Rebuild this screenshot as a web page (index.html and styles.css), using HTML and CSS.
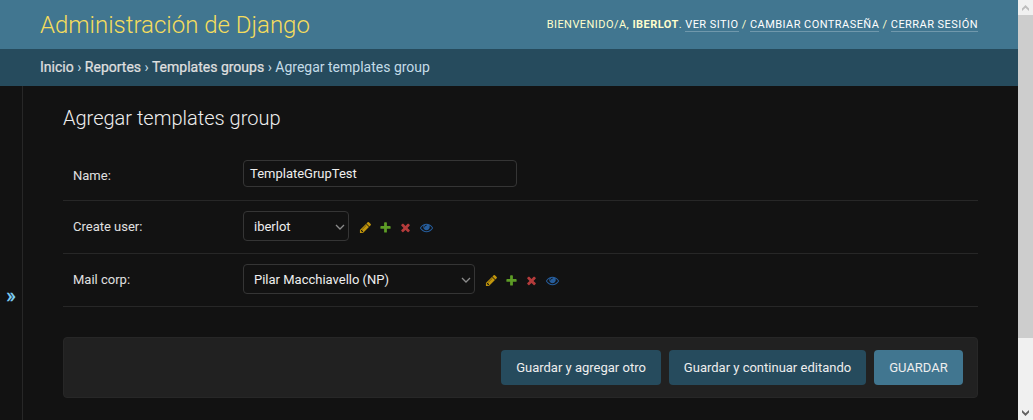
FILE: index.html
```html
<!DOCTYPE html>
<html lang="es">
<head>
<meta charset="utf-8">
<title>Agregar templates group | Administración de Django</title>
<link rel="stylesheet" href="styles.css">
</head>
<body>
<svg class="sprite" aria-hidden="true">
  <symbol id="change" viewBox="0 0 1792 1792"><path d="M491 1536l91-91-235-235-91 91v107h128v128h107zm523-928q0-22-22-22-10 0-17 7l-542 542q-7 7-7 17 0 22 22 22 10 0 17-7l542-542q7-7 7-17zm-54-192l416 416-832 832H128v-416zm683 96q0 53-37 90l-166 166-416-416 166-165q36-38 90-38 53 0 91 38l235 234q37 39 37 91z"/></symbol>
  <symbol id="add" viewBox="0 0 1792 1792"><path d="M1600 796v192q0 40-28 68t-68 28h-416v416q0 40-28 68t-68 28H800q-40 0-68-28t-28-68v-416H288q-40 0-68-28t-28-68V796q0-40 28-68t68-28h416V284q0-40 28-68t68-28h192q40 0 68 28t28 68v416h416q40 0 68 28t28 68z"/></symbol>
  <symbol id="delete" viewBox="0 0 1792 1792"><path d="M1490 1322q0 40-28 68l-136 136q-28 28-68 28t-68-28l-294-294-294 294q-28 28-68 28t-68-28l-136-136q-28-28-28-68t28-68l294-294-294-294q-28-28-28-68t28-68l136-136q28-28 68-28t68 28l294 294 294-294q28-28 68-28t68 28l136 136q28 28 28 68t-28 68l-294 294 294 294q28 28 28 68z"/></symbol>
  <symbol id="view" viewBox="0 0 1792 1792"><path d="M1664 960q-152-236-381-353 61 104 61 225 0 185-131.500 316.500T896 1280t-316.500-131.500T448 832q0-121 61-225-229 117-381 353 133 205 333.500 326.500T896 1408t434.500-121.500T1664 960zM944 576q0-20-14-34t-34-14q-125 0-214.500 89.500T592 832q0 20 14 34t34 14 34-14 14-34q0-86 61-147t147-61q20 0 34-14t14-34zm848 384q0 34-20 69-140 230-376.500 368.500T896 1536t-499.500-139T20 1029Q0 994 0 960t20-69q140-229 376.500-368T896 384t499.500 139T1772 891q20 35 20 69z"/></symbol>
  <symbol id="chevron" viewBox="0 0 10 6"><path d="M1 1l4 4 4-4" fill="none" stroke="currentColor" stroke-width="1.3"/></symbol>
</svg>
<div class="window">
  <div class="page">
    <header class="header">
      <h1 class="brand">Administración de Django</h1>
      <div class="user-tools">Bienvenido/a, <strong>iberlot</strong>. <a>Ver sitio</a> / <a>Cambiar contraseña</a> / <a>Cerrar sesión</a></div>
    </header>
    <nav class="breadcrumbs"><a>Inicio</a> › <a>Reportes</a> › <a>Templates groups</a> › Agregar templates group</nav>
    <div class="main">
      <div class="nav-toggle"><span>»</span></div>
      <main class="content">
        <h2 class="title">Agregar templates group</h2>
        <div class="row row-name"><label class="label">Name:</label><div class="input">TemplateGrupTest</div></div>
        <div class="row row-select">
          <label class="label">Create user:</label>
          <div class="select select-user">iberlot<svg class="chevron"><use href="#chevron"/></svg></div>
          <div class="links"><svg class="icon change"><use href="#change"/></svg><svg class="icon add"><use href="#add"/></svg><svg class="icon delete"><use href="#delete"/></svg><svg class="icon view"><use href="#view"/></svg></div>
        </div>
        <div class="row row-select">
          <label class="label">Mail corp:</label>
          <div class="select select-mail">Pilar Macchiavello (NP)<svg class="chevron"><use href="#chevron"/></svg></div>
          <div class="links"><svg class="icon change"><use href="#change"/></svg><svg class="icon add"><use href="#add"/></svg><svg class="icon delete"><use href="#delete"/></svg><svg class="icon view"><use href="#view"/></svg></div>
        </div>
        <div class="submit-row">
          <div class="button button-another">Guardar y agregar otro</div>
          <div class="button button-continue">Guardar y continuar editando</div>
          <div class="button button-save">GUARDAR</div>
        </div>
      </main>
    </div>
  </div>
  <div class="scrollbar">
    <div class="arrow arrow-up"><svg viewBox="0 0 7 6"><path d="M0 3.500L3.500 0 7 3.500V6L3.500 2.800 0 6z"/></svg></div>
    <div class="thumb"></div>
    <div class="arrow arrow-down"><svg viewBox="0 0 7 6"><path d="M0 0l3.500 3.200L7 0v2.500L3.500 6 0 2.500z"/></svg></div>
  </div>
</div>
</body>
</html>
```

FILE: styles.css
```css
* { box-sizing: border-box; }
body { margin: 0; background: #121212; color: #eee; font: 13px/20px Roboto, "Liberation Sans", sans-serif; }
.sprite { display: none; }
.window { display: flex; height: 420px; overflow: hidden; }
.page { flex: 1; display: flex; flex-direction: column; }
.header { height: 49px; padding: 0 40px; display: flex; align-items: center; justify-content: space-between; background: #417690; color: #ffc; }
.brand { margin: 0; font-size: 24px; line-height: 30px; font-weight: 300; color: #f5dd5d; }
.user-tools { font-size: 11px; line-height: 14px; letter-spacing: .45px; font-weight: 400; text-transform: uppercase; white-space: nowrap; }
.user-tools strong { font-weight: 700; }
.user-tools a { color: #fff; border-bottom: 1px solid rgba(255,255,255,.25); }
.breadcrumbs { height: 37px; padding: 9px 40px; font-size: 14px; line-height: 18px; background: #264b5d; color: #c4dce8; white-space: pre; }
.breadcrumbs a { color: #e0e0e0; -webkit-text-stroke: .2px #e0e0e0; }
.main { flex: 1; display: flex; }
.nav-toggle { width: 23px; padding-top: 200px; border-right: 1px solid #272727; text-align: center; font-size: 20px; line-height: 20px; color: #81d4fa; -webkit-text-stroke: .4px #81d4fa; }
.content { flex: 1; padding: 20px 40px 0; }
.title { margin: 0; height: 44px; font-size: 20px; line-height: 24px; font-weight: 300; }
.row { display: flex; align-items: center; padding: 0 10px; border-bottom: 1px solid #272727; }
.row-name { height: 51px; padding-top: 10px; align-items: flex-start; }
.row-select { height: 53px; align-items: flex-start; padding-top: 10px; }
.label { width: 170px; padding-top: 6px; color: #e0e0e0; }
.input { width: 274px; height: 27px; padding: 3px 6px; border: 1px solid #353535; border-radius: 4px; line-height: 19px; }
.select { height: 30px; display: flex; align-items: center; justify-content: space-between; padding: 1px 3px 0 10px; border: 1px solid #353535; border-radius: 4px; }
.select-user { width: 106px; }
.select-mail { width: 232px; }
.chevron { width: 10px; height: 6px; color: #8b8b8b; }
.links { display: flex; gap: 7.2px; padding: 10px 0 0 10px; }
.icon { width: 13px; height: 13px; opacity: .8; }
.change { fill: #efb80b; }
.add { fill: #70bf2b; }
.delete { fill: #dd4646; }
.view { fill: #2b70bf; }
.submit-row { margin-top: 30px; height: 61px; padding: 12px 14px; display: flex; justify-content: flex-end; gap: 8px; border: 1px solid #272727; border-radius: 4px; background: #212121; }
.button { height: 35px; border-radius: 4px; background: #264b5d; line-height: 35px; text-align: center; white-space: nowrap; }
.button-another { width: 160px; }
.button-continue { width: 197px; }
.button-save { width: 89px; background: #417690; }
.scrollbar { width: 15px; display: flex; flex-direction: column; background: #f0f0f0; }
.arrow { height: 15px; display: flex; align-items: center; justify-content: center; }
.arrow svg { width: 7px; height: 6px; }
.arrow-up { fill: #bcbcbc; }
.arrow-down { margin-top: auto; fill: #606060; }
.thumb { height: 323px; background: #cdcdcd; }
```
